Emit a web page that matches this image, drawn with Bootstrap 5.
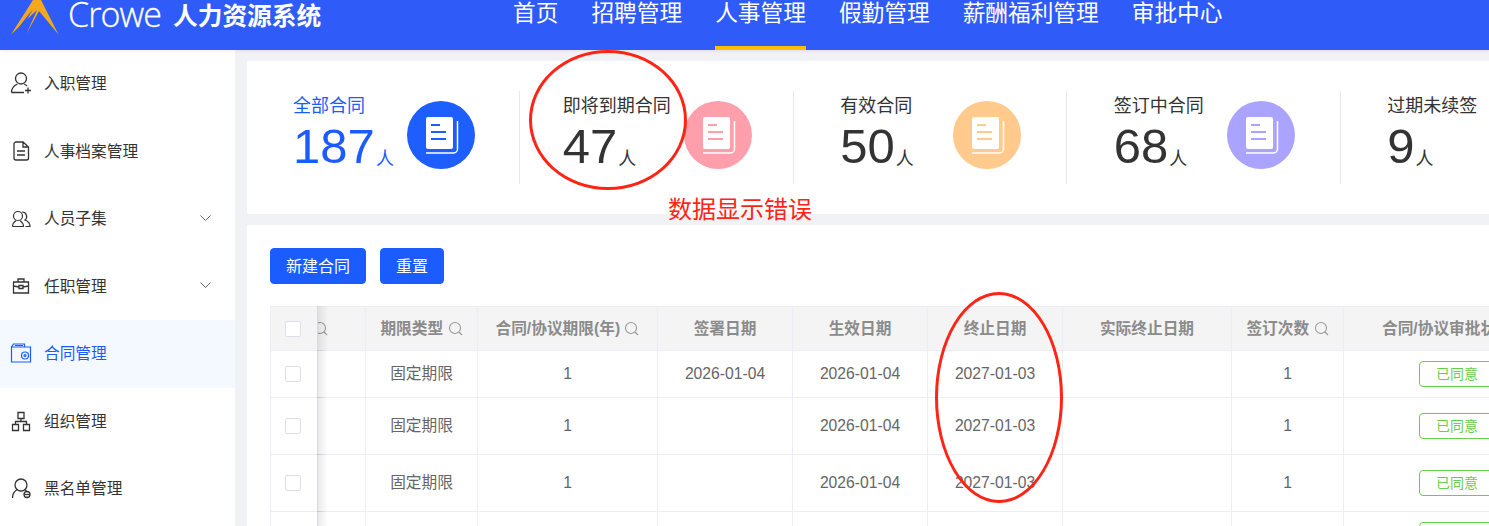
<!DOCTYPE html>
<html lang="zh"><head><meta charset="utf-8"><title>人力资源系统</title>
<link href="https://cdn.jsdelivr.net/npm/bootstrap@5.3.0/dist/css/bootstrap.min.css" rel="stylesheet">
<style>
html,body{height:526px;overflow:hidden;background:#f0f2f5;font-family:"Liberation Sans","Noto Sans CJK SC",sans-serif;color:#333}
.topbar{height:50px;background:#2f5cf8;color:#fff;overflow:hidden;box-shadow:0 1px 4px rgba(0,0,0,.08);position:relative;z-index:3}
.brand-mark{width:60px;height:36px;flex:none}
.brand-word{font-family:"Open Sans",sans-serif;font-weight:300;font-size:34px;line-height:28px;letter-spacing:-.9px;margin-left:8px;width:105px;-webkit-text-stroke:.3px #fff}
.brand-name{font-size:24.7px;font-weight:700;line-height:28px;white-space:nowrap;font-family:"Noto Sans CJK SC",sans-serif}
.top-menu{position:absolute;left:513px;top:0;gap:33px;height:50px}
.top-link{font-size:22.7px;line-height:24px;color:#fff;text-decoration:none;height:50px;white-space:nowrap;font-family:"Noto Sans CJK SC",sans-serif}
.top-link.on{box-shadow:inset 0 -4px 0 #ffbf00}
.side{width:235px;flex:none;background:#fff;height:476px}
.side-item{height:67.5px;display:flex;align-items:center;color:#333;font-size:15.7px;text-decoration:none;padding:0 0 1px 10px;font-family:"Noto Sans CJK SC",sans-serif}
.side-item svg.ic{width:22px;height:22px;margin-right:12px;flex:none}
.side-item.on{background:#f4f8ff;color:#1a5cff}
.chev{width:11px;height:7px;margin:0 24px 0 auto}
.main-col{margin:11px 0 0 12px;width:1242px;flex:none}
.stat-panel{background:#fff;height:153px;padding-top:30px;overflow:hidden}
.stat{flex:0 0 273.5px;height:93px;border-right:1px solid #e6e8eb;justify-content:center;align-items:flex-start;padding:5px 0 0 2px}
.stat.blue{color:#1a5cff;flex-basis:273px}
.stat-text{min-width:113px;padding-right:13px;white-space:nowrap}
.stat-label{font-size:18px;line-height:20px}
.stat-num{font-size:49px;line-height:56px;margin-top:2px}
.stat-unit{font-size:18px;vertical-align:-2px;margin-left:1px}
.stat-ball{width:68px;height:68px;flex:none;border-radius:50%;margin-top:5px;display:flex}
.ball-a{background:#1e5eff;color:#1e5eff}.ball-b{background:#ff9fab;color:#ff9fab}.ball-c{background:#ffca8c;color:#ffca8c}.ball-d{background:#aaa3ff;color:#aaa3ff}
.list-panel{background:#fff;margin-top:11px;height:301px;padding:23px 0 0 23px;overflow:hidden}
.act-row{gap:14px}
.act-btn{height:36px;background:#1a5cff;border-color:#1a5cff;font-size:16px;padding:0 15px 3px;border-radius:4px;line-height:30px;color:#fff;font-family:"Noto Sans CJK SC",sans-serif}
.grid-wrap{margin-top:22px;width:1219px;overflow:hidden}
.data-grid{table-layout:fixed;border-collapse:collapse;width:1280px;margin:0;font-size:15.7px;color:#666}
.data-grid th,.data-grid td{border:1px solid #ebeef5;text-align:center;vertical-align:middle;padding:0;white-space:nowrap;overflow:hidden}
.data-grid th{background:#f4f4f5;height:44px;color:#8b8b8b;font-weight:700}
.data-grid td{height:57px}
.data-grid tr.short td{height:47px}
.data-grid .fix{overflow:visible;position:relative;z-index:2;background:#fff}
.data-grid th.fix{background:#f4f4f5}
.data-grid .fix::after{content:"";position:absolute;top:-1px;bottom:-1px;left:100%;width:11px;background:linear-gradient(90deg,rgba(0,0,0,.09),rgba(0,0,0,0))}
.tick{display:block;width:16px;height:16px;background:#fff;border:1px solid #dcdfe6;border-radius:2px;margin:0 0 0 14px}
.loupe{width:15px;height:15px;vertical-align:-2px}
.cut-loupe{display:block;margin:0 0 0 -5px}
.head-last{text-align:left!important;padding-left:38px!important}
.state-tag{display:inline-block;width:76px;height:26px;line-height:22px;font-size:14px;color:#67cf4b;border:1px solid #67cf4b;border-radius:4px;text-align:center;font-family:"Noto Sans CJK SC",sans-serif}
.tag-cell{text-align:left!important;padding-left:75px!important}
.mark-ring{position:absolute;border:3px solid #ff2415;border-radius:50%;z-index:5;pointer-events:none}
.ring-a{left:529px;top:50px;width:158px;height:140px}
.ring-b{left:935px;top:292px;width:128px;height:211px}
.mark-note{position:absolute;left:668px;top:192px;font-size:24px;line-height:32px;color:#ff2415;z-index:5;font-family:"Noto Sans CJK SC",sans-serif}
</style></head><body>
<header class="topbar d-flex align-items-start">
<svg class="brand-mark" viewBox="0 0 60 36"><path fill="#f5a81c" d="M11 34.500 33 0h8l17.500 34.500L39 11 26 34.500 37 10z"/><path fill="#2f5cf8" d="M12.500 35H18.500L33 9zM20 35h5.500L36 12z"/></svg>
<div class="brand-word">Crowe</div>
<div class="brand-name">人力资源系统</div>
<nav class="top-menu d-flex">
<a class="top-link" href="#">首页</a><a class="top-link" href="#">招聘管理</a><a class="top-link on" href="#">人事管理</a><a class="top-link" href="#">假勤管理</a><a class="top-link" href="#">薪酬福利管理</a><a class="top-link" href="#">审批中心</a>
</nav>
</header>
<div class="d-flex">
<aside class="side">
<a class="side-item" href="#"><svg class="ic" viewBox="0 0 22 22" fill="none" stroke="#333" stroke-width="1.3"><circle cx="11" cy="6.500" r="5.500"/><path d="M1.500 20.500c0-4 2.500-7 6-8.500M14 12c1.200.5 2.200 1.200 3 2M1.500 20.500H14M15 18.500h6M18 15.500v6"/></svg>入职管理</a>
<a class="side-item" href="#"><svg class="ic" viewBox="0 0 22 22" fill="none" stroke="#333" stroke-width="1.300"><path d="M6 2h7l5.500 5v11a2 2 0 0 1-2 2H6a2 2 0 0 1-2-2V4a2 2 0 0 1 2-2zM13 2v5h5.500M7 11h8M7 15h8"/></svg>人事档案管理</a>
<a class="side-item" href="#"><svg class="ic" viewBox="0 0 22 22" fill="none" stroke="#333" stroke-width="1.200"><circle cx="8" cy="9" r="4.500"/><path d="M2.500 19.500c0-3 1.500-4.500 3.500-6M10 13.500c2 1.500 3.500 3 3.500 6h-11M12 5a4.500 4.500 0 0 1 3 8c2.500 1 5 3 5 6.500h-4.500"/></svg>人员子集<svg class="chev" viewBox="0 0 11 7" fill="none" stroke="#666" stroke-width="1"><path d="M.5.500l5 5 5-5"/></svg></a>
<a class="side-item" href="#"><svg class="ic" viewBox="0 0 22 22" fill="none" stroke="#333" stroke-width="1.300"><path d="M3.500 7h15v11h-15zM8 7V4h6v3M3.500 11l5.500 1M18.500 11l-5.500 1M9 10.500h4v3H9z"/></svg>任职管理<svg class="chev" viewBox="0 0 11 7" fill="none" stroke="#666" stroke-width="1"><path d="M.5.500l5 5 5-5"/></svg></a>
<a class="side-item on" href="#"><svg class="ic" viewBox="0 0 22 22" fill="none" stroke="#1a5cff" stroke-width="1.200"><path d="M1.500 20V5l2-3h11v3h6v15zM1.500 5h13M5 3.500h8"/><circle cx="15" cy="13.500" r="3.500"/><circle cx="15" cy="13.500" r="1"/></svg>合同管理</a>
<a class="side-item" href="#"><svg class="ic" viewBox="0 0 22 22" fill="none" stroke="#333" stroke-width="1.300"><path d="M8 2.500h6v6H8zM2.500 14.500h6v6h-6zM13.500 14.500h6v6h-6zM11 8.500v3M5.500 14.500v-3h11v3"/></svg>组织管理</a>
<a class="side-item" href="#"><svg class="ic" viewBox="0 0 22 22" fill="none" stroke="#333" stroke-width="1.300"><circle cx="11" cy="8" r="6"/><path d="M2.500 21c0-4 2-7 5-8.500M14.500 12.500c.8.400 1.500.8 2 1.400"/><circle cx="17" cy="17.500" r="3"/><path d="M14.500 17.500h5"/></svg>黑名单管理</a>
</aside>
<main class="main-col">
<section class="stat-panel d-flex">
<div class="stat d-flex blue"><div class="stat-text"><div class="stat-label">全部合同</div><div class="stat-num">187<span class="stat-unit">人</span></div></div><div class="stat-ball ball-a"><svg viewBox="0 0 68 68" width="68" height="68"><rect x="19" y="16" width="27" height="32" rx="2" fill="#fff"/><path d="M24 24h9M24 31h15M24 38h15" stroke="currentColor" stroke-width="2"/><path d="M50.500 20v28a4 4 0 0 1-4 4H19" fill="none" stroke="#fff" stroke-width="1.500"/></svg></div></div>
<div class="stat d-flex"><div class="stat-text"><div class="stat-label">即将到期合同</div><div class="stat-num">47<span class="stat-unit">人</span></div></div><div class="stat-ball ball-b"><svg viewBox="0 0 68 68" width="68" height="68"><rect x="19" y="16" width="27" height="32" rx="2" fill="#fff"/><path d="M24 24h9M24 31h15M24 38h15" stroke="currentColor" stroke-width="2"/><path d="M50.500 20v28a4 4 0 0 1-4 4H19" fill="none" stroke="#fff" stroke-width="1.500"/></svg></div></div>
<div class="stat d-flex"><div class="stat-text"><div class="stat-label">有效合同</div><div class="stat-num">50<span class="stat-unit">人</span></div></div><div class="stat-ball ball-c"><svg viewBox="0 0 68 68" width="68" height="68"><rect x="19" y="16" width="27" height="32" rx="2" fill="#fff"/><path d="M24 24h9M24 31h15M24 38h15" stroke="currentColor" stroke-width="2"/><path d="M50.500 20v28a4 4 0 0 1-4 4H19" fill="none" stroke="#fff" stroke-width="1.500"/></svg></div></div>
<div class="stat d-flex"><div class="stat-text"><div class="stat-label">签订中合同</div><div class="stat-num">68<span class="stat-unit">人</span></div></div><div class="stat-ball ball-d"><svg viewBox="0 0 68 68" width="68" height="68"><rect x="19" y="16" width="27" height="32" rx="2" fill="#fff"/><path d="M24 24h9M24 31h15M24 38h15" stroke="currentColor" stroke-width="2"/><path d="M50.500 20v28a4 4 0 0 1-4 4H19" fill="none" stroke="#fff" stroke-width="1.500"/></svg></div></div>
<div class="stat d-flex"><div class="stat-text"><div class="stat-label">过期未续签</div><div class="stat-num">9<span class="stat-unit">人</span></div></div><div class="stat-ball ball-a"></div></div>
</section>
<section class="list-panel">
<div class="d-flex act-row"><button class="btn btn-primary act-btn">新建合同</button><button class="btn btn-primary act-btn">重置</button></div>
<div class="grid-wrap">
<table class="data-grid">
<colgroup><col style="width:47px"><col style="width:48px"><col style="width:112px"><col style="width:180px"><col style="width:135px"><col style="width:135px"><col style="width:135px"><col style="width:169px"><col style="width:112px"><col style="width:207px"></colgroup>
<thead><tr><th class="fix"><span class="tick"></span></th><th><svg class="loupe cut-loupe" viewBox="0 0 15 15" fill="none" stroke="#999" stroke-width="1.100"><circle cx="7" cy="7" r="5.500"/><path d="M11 11l3 3"/></svg></th><th>期限类型 <svg class="loupe" viewBox="0 0 15 15" fill="none" stroke="#999" stroke-width="1.100"><circle cx="7" cy="7" r="5.500"/><path d="M11 11l3 3"/></svg></th><th>合同/协议期限(年) <svg class="loupe" viewBox="0 0 15 15" fill="none" stroke="#999" stroke-width="1.100"><circle cx="7" cy="7" r="5.500"/><path d="M11 11l3 3"/></svg></th><th>签署日期</th><th>生效日期</th><th>终止日期</th><th>实际终止日期</th><th>签订次数 <svg class="loupe" viewBox="0 0 15 15" fill="none" stroke="#999" stroke-width="1.100"><circle cx="7" cy="7" r="5.500"/><path d="M11 11l3 3"/></svg></th><th class="head-last">合同/协议审批状态</th></tr></thead>
<tbody>
<tr class="short"><td class="fix"><span class="tick"></span></td><td></td><td>固定期限</td><td>1</td><td>2026-01-04</td><td>2026-01-04</td><td>2027-01-03</td><td></td><td>1</td><td class="tag-cell"><span class="state-tag">已同意</span></td></tr>
<tr><td class="fix"><span class="tick"></span></td><td></td><td>固定期限</td><td>1</td><td></td><td>2026-01-04</td><td>2027-01-03</td><td></td><td>1</td><td class="tag-cell"><span class="state-tag">已同意</span></td></tr>
<tr><td class="fix"><span class="tick"></span></td><td></td><td>固定期限</td><td>1</td><td></td><td>2026-01-04</td><td>2027-01-03</td><td></td><td>1</td><td class="tag-cell"><span class="state-tag">已同意</span></td></tr>
<tr class="short"><td class="fix"></td><td></td><td></td><td></td><td></td><td></td><td></td><td></td><td></td><td class="tag-cell"><span class="state-tag">已同意</span></td></tr>
</tbody></table>
</div>
</section>
</main>
</div>
<div class="mark-ring ring-a"></div><div class="mark-ring ring-b"></div><div class="mark-note">数据显示错误</div>
<script src="https://cdn.jsdelivr.net/npm/bootstrap@5.3.0/dist/js/bootstrap.bundle.min.js"></script>
</body></html>
